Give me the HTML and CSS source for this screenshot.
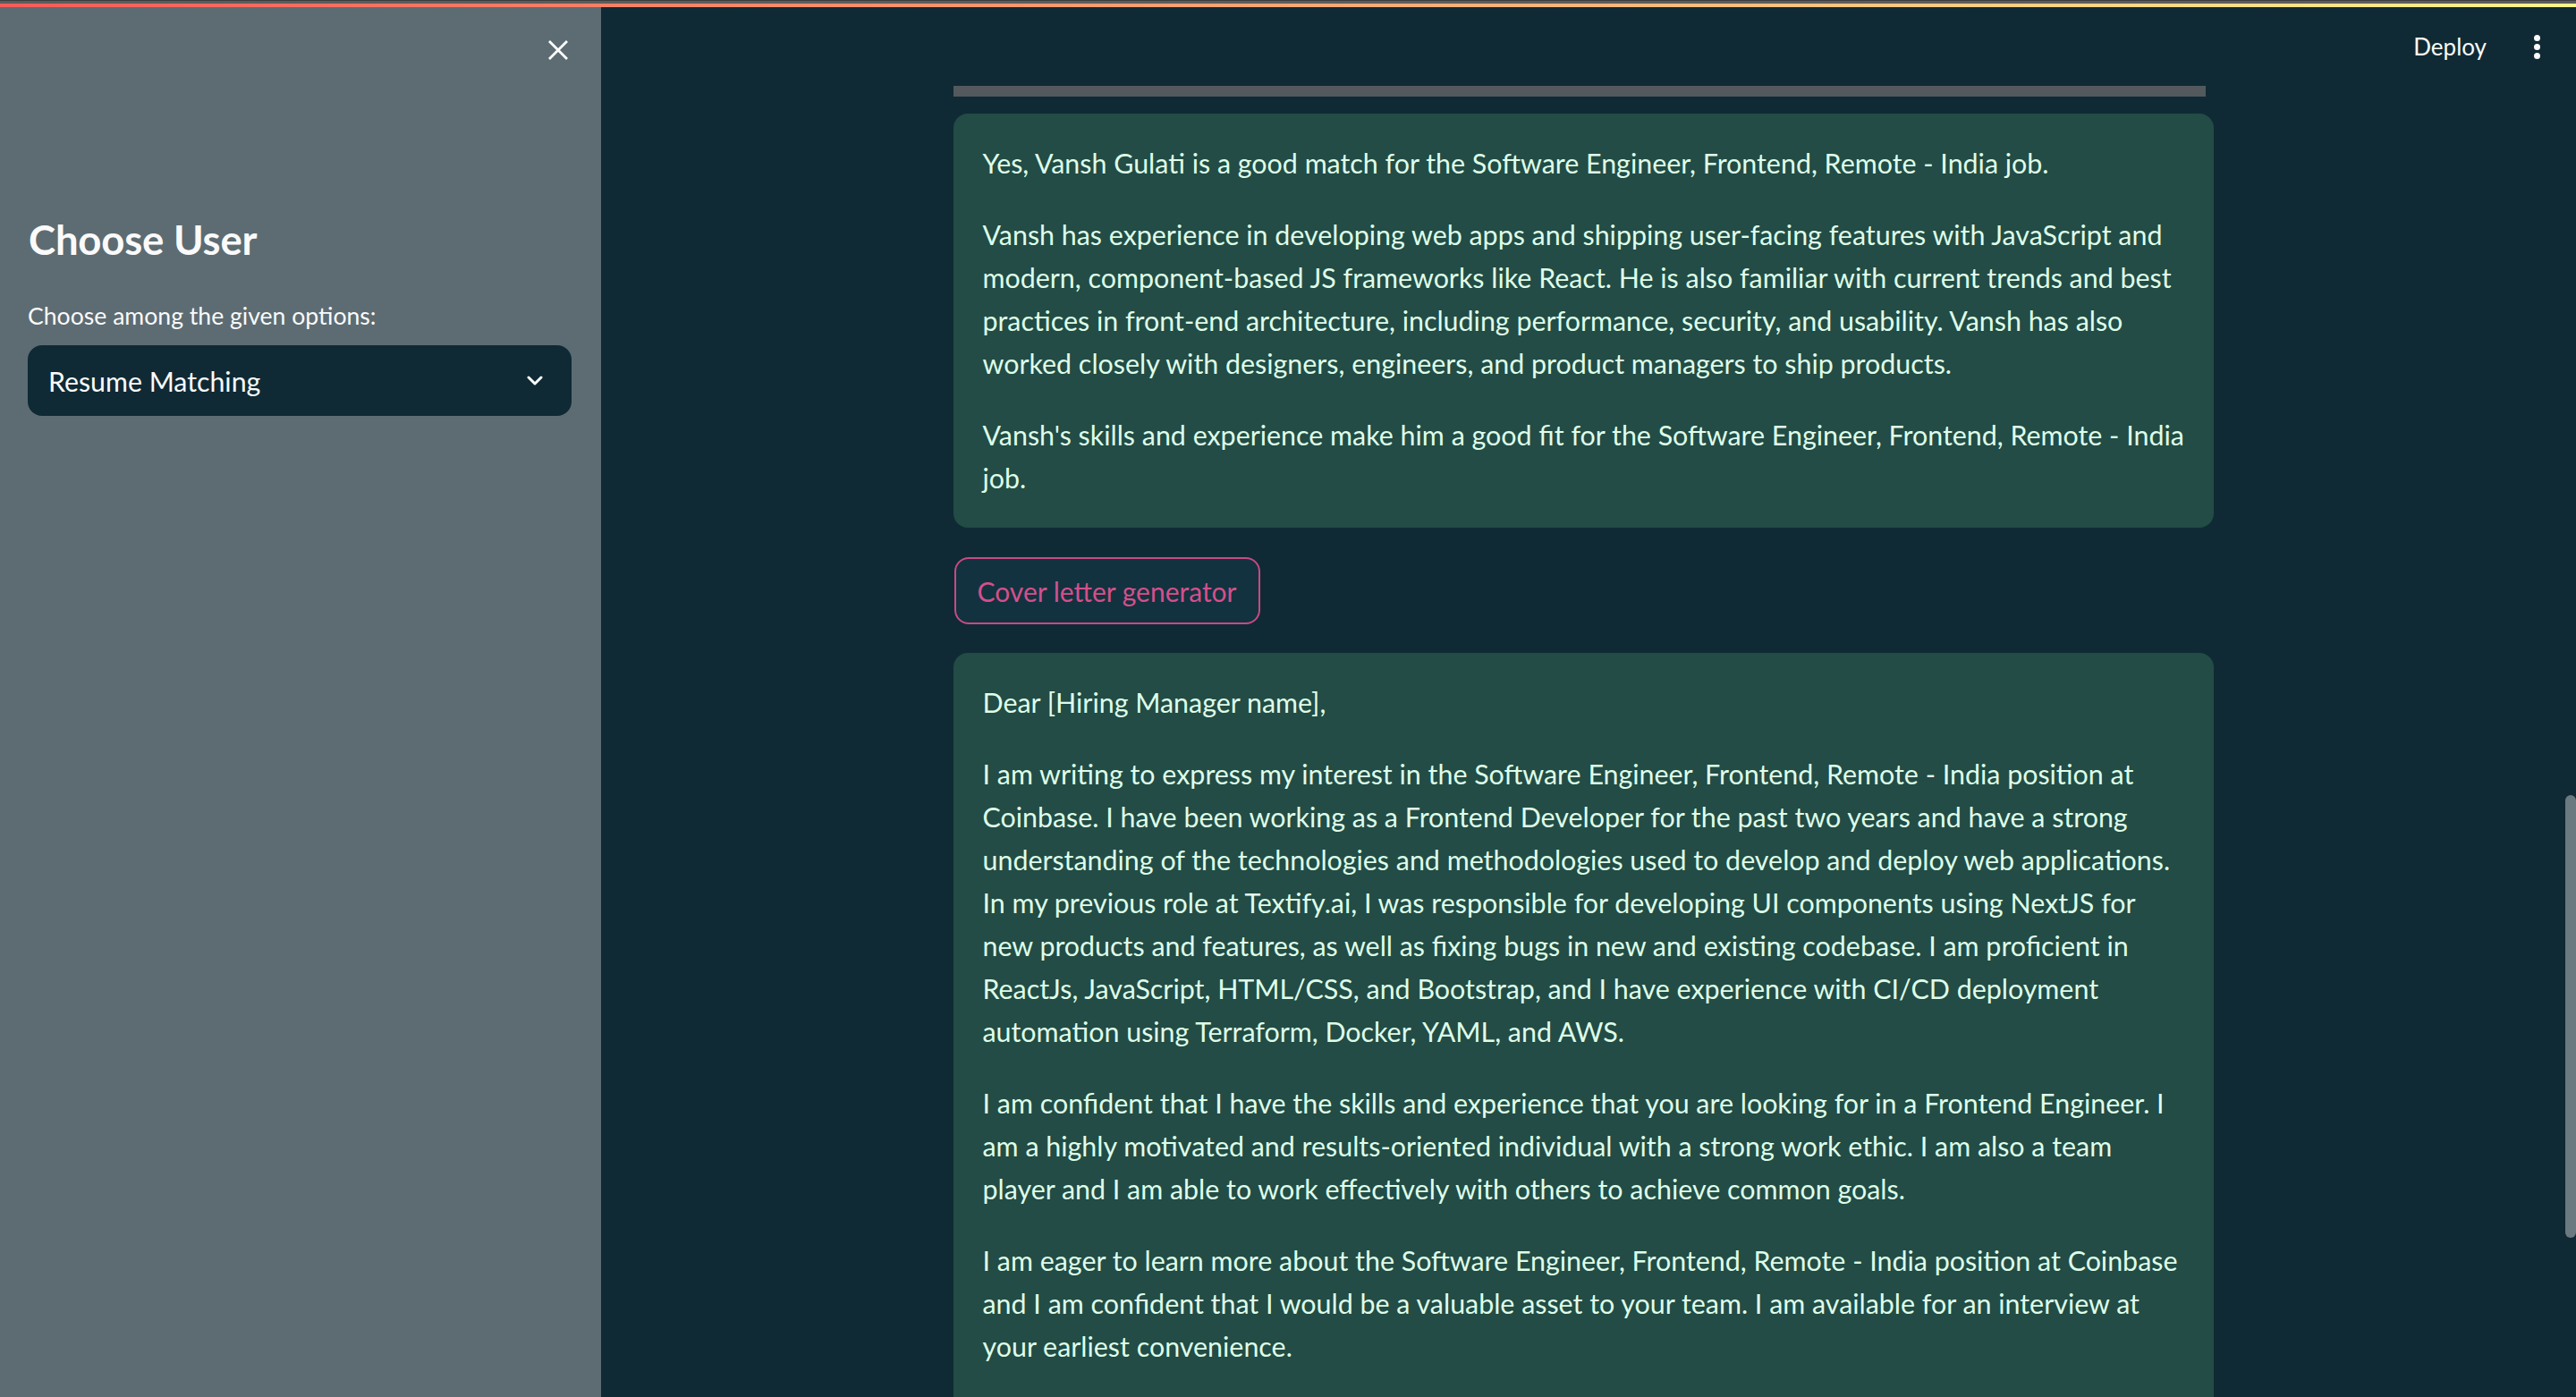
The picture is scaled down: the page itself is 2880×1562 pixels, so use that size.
FILE: index.html
```html
<!DOCTYPE html>
<html lang="en">
<head>
<meta charset="utf-8">
<title>Resume Matching</title>
<link rel="stylesheet" href="styles.css">
</head>
<body>
<div class="app">
  <div class="decoration"></div>
  <div class="frame">
    <aside class="sidebar">
      <div class="sidebar-top">
        <button class="close" aria-label="Close sidebar">
          <svg width="24" height="24" viewBox="0 0 24 24"><path d="M2 2 L22 22 M22 2 L2 22" stroke="#ffffff" stroke-width="2.8" fill="none"/></svg>
        </button>
      </div>
      <h2 class="side-title">Choose User</h2>
      <div class="field-label">Choose among the given options:</div>
      <div class="select">
        <span class="select-value">Resume Matching</span>
        <svg class="chev" width="20" height="12" viewBox="0 0 20 12"><path d="M3 2 L10 9 L17 2" stroke="#ffffff" stroke-width="3" fill="none" stroke-linecap="round" stroke-linejoin="round"/></svg>
      </div>
    </aside>
    <main class="main">
      <header class="topbar">
        <span class="deploy">Deploy</span>
        <span class="kebab"><i></i><i></i><i></i></span>
      </header>
      <div class="scroll">
        <div class="block">
          <div class="grayline"></div>
          <div class="alert">
            <p>Yes, Vansh Gulati is a good match for the Software Engineer, Frontend, Remote - India job.</p>
            <p>Vansh has experience in developing web apps and shipping user-facing features with JavaScript and<br>modern, component-based JS frameworks like React. He is also familiar with current trends and best<br>practices in front-end architecture, including performance, security, and usability. Vansh has also<br>worked closely with designers, engineers, and product managers to ship products.</p>
            <p>Vansh's skills and experience make him a good fit for the Software Engineer, Frontend, Remote - India<br>job.</p>
          </div>
          <button class="btn">Cover letter generator</button>
          <div class="alert alert-long">
            <p>Dear [Hiring Manager name],</p>
            <p>I am writing to express my interest in the Software Engineer, Frontend, Remote - India position at<br>Coinbase. I have been working as a Frontend Developer for the past two years and have a strong<br>understanding of the technologies and methodologies used to develop and deploy web applications.<br>In my previous role at Textify.ai, I was responsible for developing UI components using NextJS for<br>new products and features, as well as fixing bugs in new and existing codebase. I am proficient in<br>ReactJs, JavaScript, HTML/CSS, and Bootstrap, and I have experience with CI/CD deployment<br>automation using Terraform, Docker, YAML, and AWS.</p>
            <p>I am confident that I have the skills and experience that you are looking for in a Frontend Engineer. I<br>am a highly motivated and results-oriented individual with a strong work ethic. I am also a team<br>player and I am able to work effectively with others to achieve common goals.</p>
            <p>I am eager to learn more about the Software Engineer, Frontend, Remote - India position at Coinbase<br>and I am confident that I would be a valuable asset to your team. I am available for an interview at<br>your earliest convenience.</p>
          </div>
        </div>
      </div>
      <div class="scrolltrack"><div class="thumb"></div></div>
    </main>
  </div>
</div>
</body>
</html>
```

FILE: styles.css
```css
* { box-sizing: border-box; }

html, body {
  margin: 0;
  padding: 0;
  height: 100%;
  overflow: hidden;
  background: #0f2a35;
  font-family: Lato, "Open Sans", sans-serif;
}

.app {
  height: 1562px;
  display: flex;
  flex-direction: column;
}

.decoration {
  height: 8px;
  flex: none;
  border-top: 1px solid #3c3c3c;
  background:
    linear-gradient(#5c5c5c, #5c5c5c) top / 100% 3px no-repeat,
    linear-gradient(90deg, #f55c5a 0%, #f8916c 35%, #fbc27f 70%, #fef38b 100%);
}

.frame {
  flex: 1;
  display: flex;
  min-height: 0;
}

/* Sidebar */
.sidebar {
  width: 672px;
  flex: none;
  background: #5d6c73;
  padding: 0 33px 0 31px;
  display: flex;
  flex-direction: column;
}

.sidebar-top {
  display: flex;
  justify-content: flex-end;
  padding-top: 36px;
  margin-right: 3px;
}

.close {
  width: 24px;
  height: 24px;
  padding: 0;
  border: 0;
  background: none;
  display: block;
}

.close svg { display: block; }

.side-title {
  margin: 173px 0 0 1px;
  font-size: 45.5px;
  line-height: 54px;
  font-weight: 700;
  color: #fafafa;
  letter-spacing: -0.2px;
}

.field-label {
  margin-top: 42px;
  font-size: 26.6px;
  line-height: 32px;
  color: #fafafa;
}

.select {
  margin-top: 17px;
  height: 79px;
  border-radius: 16px;
  background: #0f2a35;
  display: flex;
  align-items: center;
  justify-content: space-between;
  padding: 0 31px 0 23px;
}

.select-value {
  font-size: 30.3px;
  line-height: 36px;
  color: #fafafa;
}

.chev { display: block; }

/* Main */
.main {
  flex: 1;
  display: flex;
  position: relative;
  background: #0f2a35;
  min-width: 0;
}

.topbar {
  position: absolute;
  top: 0;
  right: 0;
  height: 88px;
  display: flex;
  align-items: center;
  gap: 53px;
  padding-right: 40px;
}

.deploy {
  font-size: 26px;
  color: #fafafa;
}

.kebab {
  display: flex;
  flex-direction: column;
  gap: 3px;
}

.kebab i {
  display: block;
  width: 7px;
  height: 7px;
  border-radius: 50%;
  background: #fafafa;
}

.scroll {
  flex: 1;
  overflow: hidden;
  padding-top: 88px;
}

.block {
  width: 1409px;
  margin: 0 auto;
}

.grayline {
  width: 1400px;
  height: 12px;
  background: #53595d;
  margin-bottom: 19px;
}

.alert {
  background: #224c45;
  border-radius: 16px;
  padding: 31px 10px 32px 33px;
  color: #dffde9;
  font-size: 30.4px;
  line-height: 48px;
}

.alert-long {
  padding-bottom: 120px;
}

.alert p {
  margin: 0 0 32px;
}

.alert p:last-child { margin-bottom: 0; }

.btn {
  display: block;
  margin: 33px 0 32px 1px;
  height: 75px;
  padding: 0 24px;
  border: 2px solid #c94a82;
  border-radius: 16px;
  background: #12323f;
  color: #d4508b;
  font-family: Lato, "Open Sans", sans-serif;
  font-size: 30px;
}

.scrolltrack {
  width: 12px;
  flex: none;
}

.thumb {
  margin-top: 881px;
  height: 495px;
  border-radius: 6px;
  background: #6a7a80;
}
```
